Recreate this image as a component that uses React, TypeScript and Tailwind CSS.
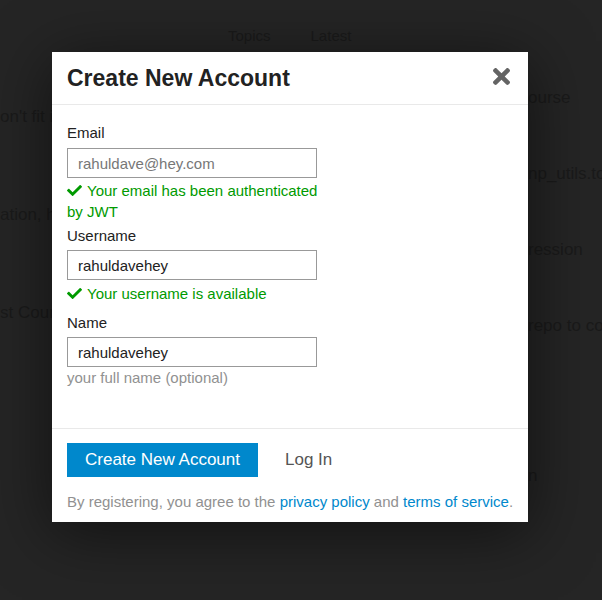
const font = { fontFamily: '"Liberation Sans", Arial, Helvetica, sans-serif' };

const Check = () => (
  <svg viewBox="0 0 512 512" className="mr-[5px] inline-block h-[15px] w-[15px] align-[-2px]" fill="currentColor">
    <path d="M173.898 439.404l-166.4-166.4c-9.997-9.997-9.997-26.206 0-36.204l36.203-36.204c9.997-9.998 26.207-9.998 36.204 0L192 312.69 432.095 72.596c9.997-9.997 26.207-9.997 36.204 0l36.203 36.204c9.997 9.997 9.997 26.206 0 36.204l-294.4 294.401c-9.998 9.997-26.207 9.997-36.204-.001z" />
  </svg>
);

const CloseIcon = () => (
  <svg viewBox="0 80 352 352" className="h-[17px] w-[17px] text-[#646464]" fill="currentColor">
    <path d="M242.72 256l100.07-100.07c12.28-12.28 12.28-32.19 0-44.48l-22.24-22.24c-12.28-12.28-32.19-12.28-44.48 0L176 189.28 75.93 89.21c-12.28-12.28-32.19-12.28-44.48 0L9.21 111.45c-12.28 12.28-12.28 32.19 0 44.48L109.28 256 9.21 356.07c-12.28 12.28-12.28 32.19 0 44.48l22.24 22.24c12.28 12.28 32.2 12.28 44.48 0L176 322.72l100.07 100.07c12.28 12.28 32.2 12.28 44.48 0l22.24-22.24c12.28-12.28 12.28-32.19 0-44.48L242.72 256z" />
  </svg>
);

const Background = () => (
  <div className="h-[600px] w-[602px] overflow-hidden bg-[#252525] text-[#1a1a1a]">
    <nav className="flex gap-[40px] pl-[228px] pt-[26px] text-[15px] leading-[20px]">
      <span>Topics</span>
      <span>Latest</span>
    </nav>
    <div className="flex">
      <div className="flex w-[528px] shrink-0 flex-col gap-[78px] whitespace-nowrap pt-[61px] text-[17px] leading-[20px]">
        <span>on't fit in memory</span>
        <span>ation, how to deal</span>
        <span>st Course</span>
      </div>
      <div className="flex flex-col gap-[56px] whitespace-nowrap pt-[42px] text-[17px] leading-[20px]">
        <span>ourse</span>
        <span>np_utils.to_categorical</span>
        <span>ression</span>
        <span>repo to colab</span>
        <span className="mt-[74px]">n</span>
      </div>
    </div>
  </div>
);

const Label = ({ children, className = '' }: { children: string; className?: string }) => (
  <label className={`block text-[15px] leading-[20px] text-[#222] ${className}`}>{children}</label>
);

const Field = ({ value, muted, className = '' }: { value: string; muted?: boolean; className?: string }) => (
  <input
    readOnly
    value={value}
    className={`block h-[30px] w-[250px] border border-[#999] bg-white px-[10px] text-[15px] outline-none ${
      muted ? 'text-[#777]' : 'text-[#222]'
    } ${className}`}
    style={font}
  />
);

export default function App() {
  return (
    <div className="relative" style={font}>
      <Background />
      <div className="absolute left-[52px] top-[52px] w-[476px] bg-white shadow-[0_10px_60px_rgba(0,0,0,0.55)]">
        <div className="flex h-[53px] items-center justify-between border-b border-[#e9e9e9] pl-[15px] pr-[18px]">
          <h3 className="text-[23px] font-bold leading-[28px] text-[#222]">Create New Account</h3>
          <button className="pb-[4px]">
            <CloseIcon />
          </button>
        </div>

        <div className="px-[15px] pb-[40px] pt-[18px]">
          <Label>Email</Label>
          <Field value="rahuldave@hey.com" muted className="mt-[5px]" />
          <p className="mt-[2px] w-[262px] text-[15px] leading-[21px] text-[#009a00]">
            <Check />
            Your email has been authenticated by JWT
          </p>

          <Label className="mt-[4px]">Username</Label>
          <Field value="rahuldavehey" className="mt-[4px]" />
          <p className="mt-[3px] text-[15px] leading-[21px] text-[#009a00]">
            <Check />
            Your username is available
          </p>

          <Label className="mt-[9px]">Name</Label>
          <Field value="rahuldavehey" className="mt-[4px]" />
          <p className="mt-[1px] text-[15px] leading-[20px] text-[#919191]">your full name (optional)</p>
        </div>

        <div className="border-t border-[#e9e9e9] pb-[10px] pl-[15px] pr-[8px] pt-[14px]">
          <div className="flex items-center">
            <button className="h-[34px] bg-[#0088cc] px-[18px] text-[17px] text-white">Create New Account</button>
            <button className="ml-[27px] text-[17px] text-[#555]">Log In</button>
          </div>
          <p className="mt-[15px] whitespace-nowrap text-[15px] leading-[20px] text-[#919191]">
            By registering, you agree to the <a className="text-[#0088cc]">privacy policy</a> and{' '}
            <a className="text-[#0088cc]">terms of service</a>.
          </p>
        </div>
      </div>
    </div>
  );
}
